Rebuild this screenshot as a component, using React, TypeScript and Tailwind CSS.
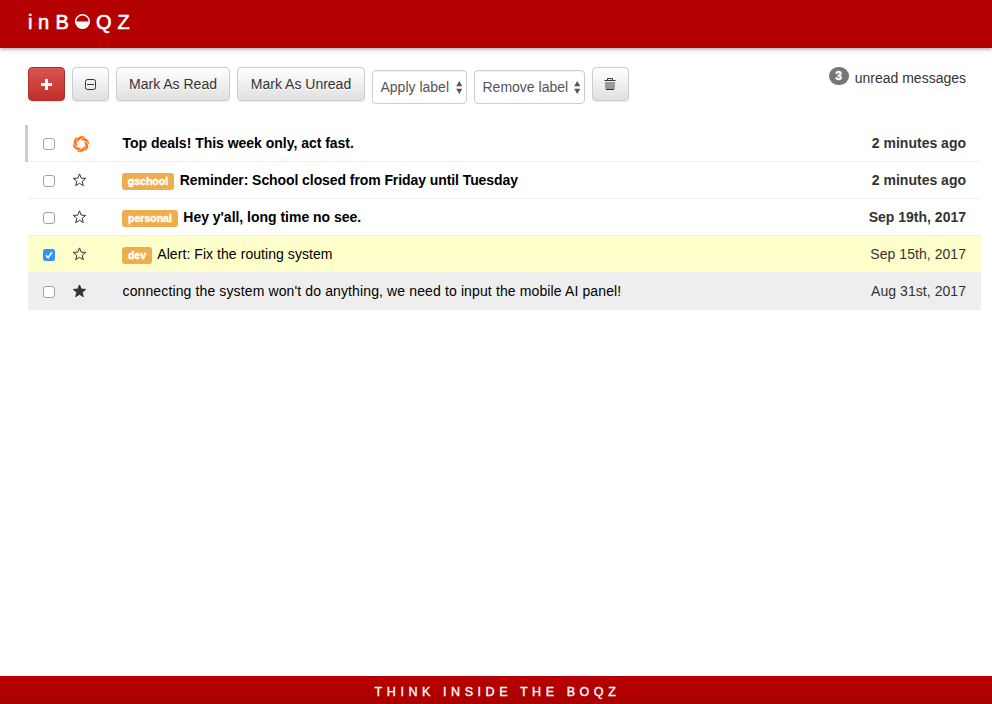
import React from "react";

type Message = {
  subject: string;
  date: string;
  label?: string;
  labelWidth?: string;
  read?: boolean;
  checked?: boolean;
  star: "open" | "full" | "loading";
  subjectSpacing: string;
  dateSpacing: string;
};

const messages: Message[] = [
  { subject: "Top deals! This week only, act fast.", date: "2 minutes ago", star: "loading", subjectSpacing: "tracking-[-0.02px] pl-[0.5px]", dateSpacing: "" },
  { subject: "Reminder: School closed from Friday until Tuesday", date: "2 minutes ago", label: "gschool", labelWidth: "w-[52px]", star: "open", subjectSpacing: "tracking-[-0.08px] pl-[0.5px]", dateSpacing: "" },
  { subject: "Hey y'all, long time no see.", date: "Sep 19th, 2017", label: "personal", labelWidth: "w-[56px]", star: "open", subjectSpacing: "tracking-[-0.02px]", dateSpacing: "" },
  { subject: "Alert: Fix the routing system", date: "Sep 15th, 2017", label: "dev", labelWidth: "w-[30px]", read: true, checked: true, star: "open", subjectSpacing: "tracking-[0.06px]", dateSpacing: "tracking-[0.05px]" },
  { subject: "connecting the system won't do anything, we need to input the mobile AI panel!", date: "Aug 31st, 2017", read: true, star: "full", subjectSpacing: "tracking-[0.125px] pl-[0.5px]", dateSpacing: "tracking-[0.05px]" },
];

function Star({ kind }: { kind: Message["star"] }) {
  if (kind === "loading") {
    return (
      <svg width="18" height="18" viewBox="-9 -9 18 18" className="-mt-[1px] block">
        {[0, 60, 120, 180, 240, 300].map((a) => (
          <path key={a} transform={`rotate(${a})`} d="M-3.4 -2.4C-4.9 -6.2 -0.5 -8.8 3.6 -7C0.8 -6.2 -2 -5 -3.4 -2.4Z" fill="#ff6a13" stroke="#ff6a13" strokeWidth=".6" strokeLinejoin="round" />
        ))}
      </svg>
    );
  }
  return (
    <svg width="15" height="14" viewBox="0 0 15 14" className="block">
      <path
        d="M7.5 .9L9.2 5.1L13.7 5.4L10.2 8.3L11.3 12.7L7.5 10.3L3.7 12.7L4.8 8.3L1.3 5.4L5.8 5.1Z"
        fill={kind === "full" ? "#333" : "none"}
        stroke="#333"
        strokeWidth="1"
      />
    </svg>
  );
}

function CheckBox({ checked }: { checked?: boolean }) {
  return checked ? (
    <svg width="12" height="12" viewBox="0 0 12 12" className="block">
      <rect width="12" height="12" rx="2.5" fill="#3291fb" />
      <path d="M3 6.4L5.1 8.7L9 3.2" fill="none" stroke="#fff" strokeWidth="1.6" />
    </svg>
  ) : (
    <span className="block h-3 w-3 rounded-[3px] border border-[#a3a3a3] bg-white" />
  );
}

const button =
  "flex h-[34px] items-center justify-center rounded-[4px] border border-[#ccc] bg-linear-to-b from-white to-[#e0e0e0] shadow-[inset_0_1px_0_rgba(255,255,255,.15),0_1px_1px_rgba(0,0,0,.075)] [text-shadow:0_1px_0_#fff]";

function Select({ text, width }: { text: string; width: string }) {
  return (
    <div className={`mt-[3px] flex h-[34px] items-center justify-between rounded-[4px] border border-[#ccc] bg-white pl-[7.5px] pr-[4px] text-[#555] shadow-[inset_0_1px_1px_rgba(0,0,0,.04)] ${width}`}>
      <span>{text}</span>
      <svg width="6.5" height="13" viewBox="0 0 7 13" preserveAspectRatio="none">
        <path d="M3.5 0L6.8 5.2H.2ZM3.5 13L6.8 7.8H.2Z" fill="#555" />
      </svg>
    </div>
  );
}

export default function App() {
  return (
    <div className="flex h-[704px] w-[992px] flex-col overflow-hidden bg-white font-['Liberation_Sans',Arial,sans-serif] text-[14px] leading-5 whitespace-nowrap text-[#333]">
      <header className="flex h-12 shrink-0 items-start bg-[#b50000] pt-[11px] pl-[28px] text-[20px] leading-[22px] text-white shadow-[0_1px_4px_rgba(0,0,0,.4)] [-webkit-text-stroke:0.6px_white]">
        <span className="w-[27.5px] tracking-[5.5px]">in</span>
        <span className="w-[19.5px]">B</span>
        <svg width="16" height="16" viewBox="0 0 16 16" className="mt-[3px] mr-[5px]">
          <circle cx="7.5" cy="7.5" r="6.8" fill="none" stroke="#fff" strokeWidth="1.4" />
          <path d="M.5 7.5H14.5A7 7 0 0 1 .5 7.5Z" fill="#fff" />
        </svg>
        <span className="tracking-[6px]">QZ</span>
      </header>
      <main className="flex-1 pr-[11px] pl-[25px]">
        <div className="flex h-[77px] items-start justify-between pt-[19px] pr-[15px] pl-[3px]">
          <div className="flex gap-[7px]">
            <div className="flex h-[34px] w-[37px] items-center justify-center rounded-[4px] border border-[#b92c28] bg-linear-to-b from-[#d9534f] to-[#c12e2a] shadow-[0_1px_1px_rgba(0,0,0,.075)]">
              <svg width="11" height="11" viewBox="0 0 11 11">
                <path d="M5.5 0V11M0 5.5H11" stroke="#fff" strokeWidth="3" />
              </svg>
            </div>
            <div className={`${button} w-[37px]`}>
              <svg width="11" height="11" viewBox="0 0 11 11" fill="none" stroke="#333">
                <rect x=".5" y=".5" width="10" height="10" rx="2" />
                <path d="M2 5.5H9" />
              </svg>
            </div>
            <div className={`${button} w-[114px]`}>Mark As Read</div>
            <div className={`${button} w-[128px]`}>Mark As Unread</div>
            <Select text="Apply label" width="w-[95px]" />
            <Select text="Remove label" width="w-[111px]" />
            <div className={`${button} w-[37px] pr-[1px]`}>
              <svg width="12" height="12" viewBox="0 0 12 12" fill="none">
                <path d="M1.5 4H10.5L10 11.5H2Z" fill="#999" />
                <path d="M.5 2.5H11.5M3.5 2V.6H8.5V2M2 11.5H10" stroke="#333" />
                <path d="M1.8 4V11M10.2 4V11" stroke="#888" />
              </svg>
            </div>
          </div>
          <div className="flex">
            <span className="mr-[6px] flex h-[18px] w-5 items-center justify-center rounded-[9px] bg-[#777] text-[12px] font-bold leading-3 text-white [-webkit-text-stroke:0.4px_white]">3</span>
            <span className="mt-[1px]">unread messages</span>
          </div>
        </div>
        {messages.map((m, i) => (
          <div key={m.subject} className={`flex h-[37px] ${i === 0 ? "border-l-[3px] border-l-[#ccc]" : "ml-[3px]"}`}>
            <div className={`flex flex-1 items-start border-b border-b-[#eee] pt-2 pr-[15px] ${m.checked ? "bg-[#ffc]" : m.read ? "bg-[#eee]" : ""} ${m.read ? "" : "font-bold"}`}>
              <div className="w-[44px] pt-[5px] pl-[15px]"><CheckBox checked={m.checked} /></div>
              <div className="w-[50px] pt-[3px]"><Star kind={m.star} /></div>
              {m.label && (
                <span className={`mt-[3px] mr-[5.3px] flex h-[17px] items-center justify-center rounded-[3px] bg-[#f0ad4e] text-[10.5px] font-bold leading-none text-white [-webkit-text-stroke:0.4px_white] ${m.labelWidth}`}>{m.label}</span>
              )}
              <span className={`text-black ${m.subjectSpacing}`}>{m.subject}</span>
              <span className={`ml-auto ${m.dateSpacing}`}>{m.date}</span>
            </div>
          </div>
        ))}
      </main>
      <footer className="flex h-7 shrink-0 items-center justify-center bg-linear-to-b from-[#b90000] to-[#a90000] pt-[3px] pl-[3px] text-[12.5px] tracking-[4.57px] text-white [-webkit-text-stroke:0.35px_white]">
        THINK INSIDE THE BOQZ
      </footer>
    </div>
  );
}
